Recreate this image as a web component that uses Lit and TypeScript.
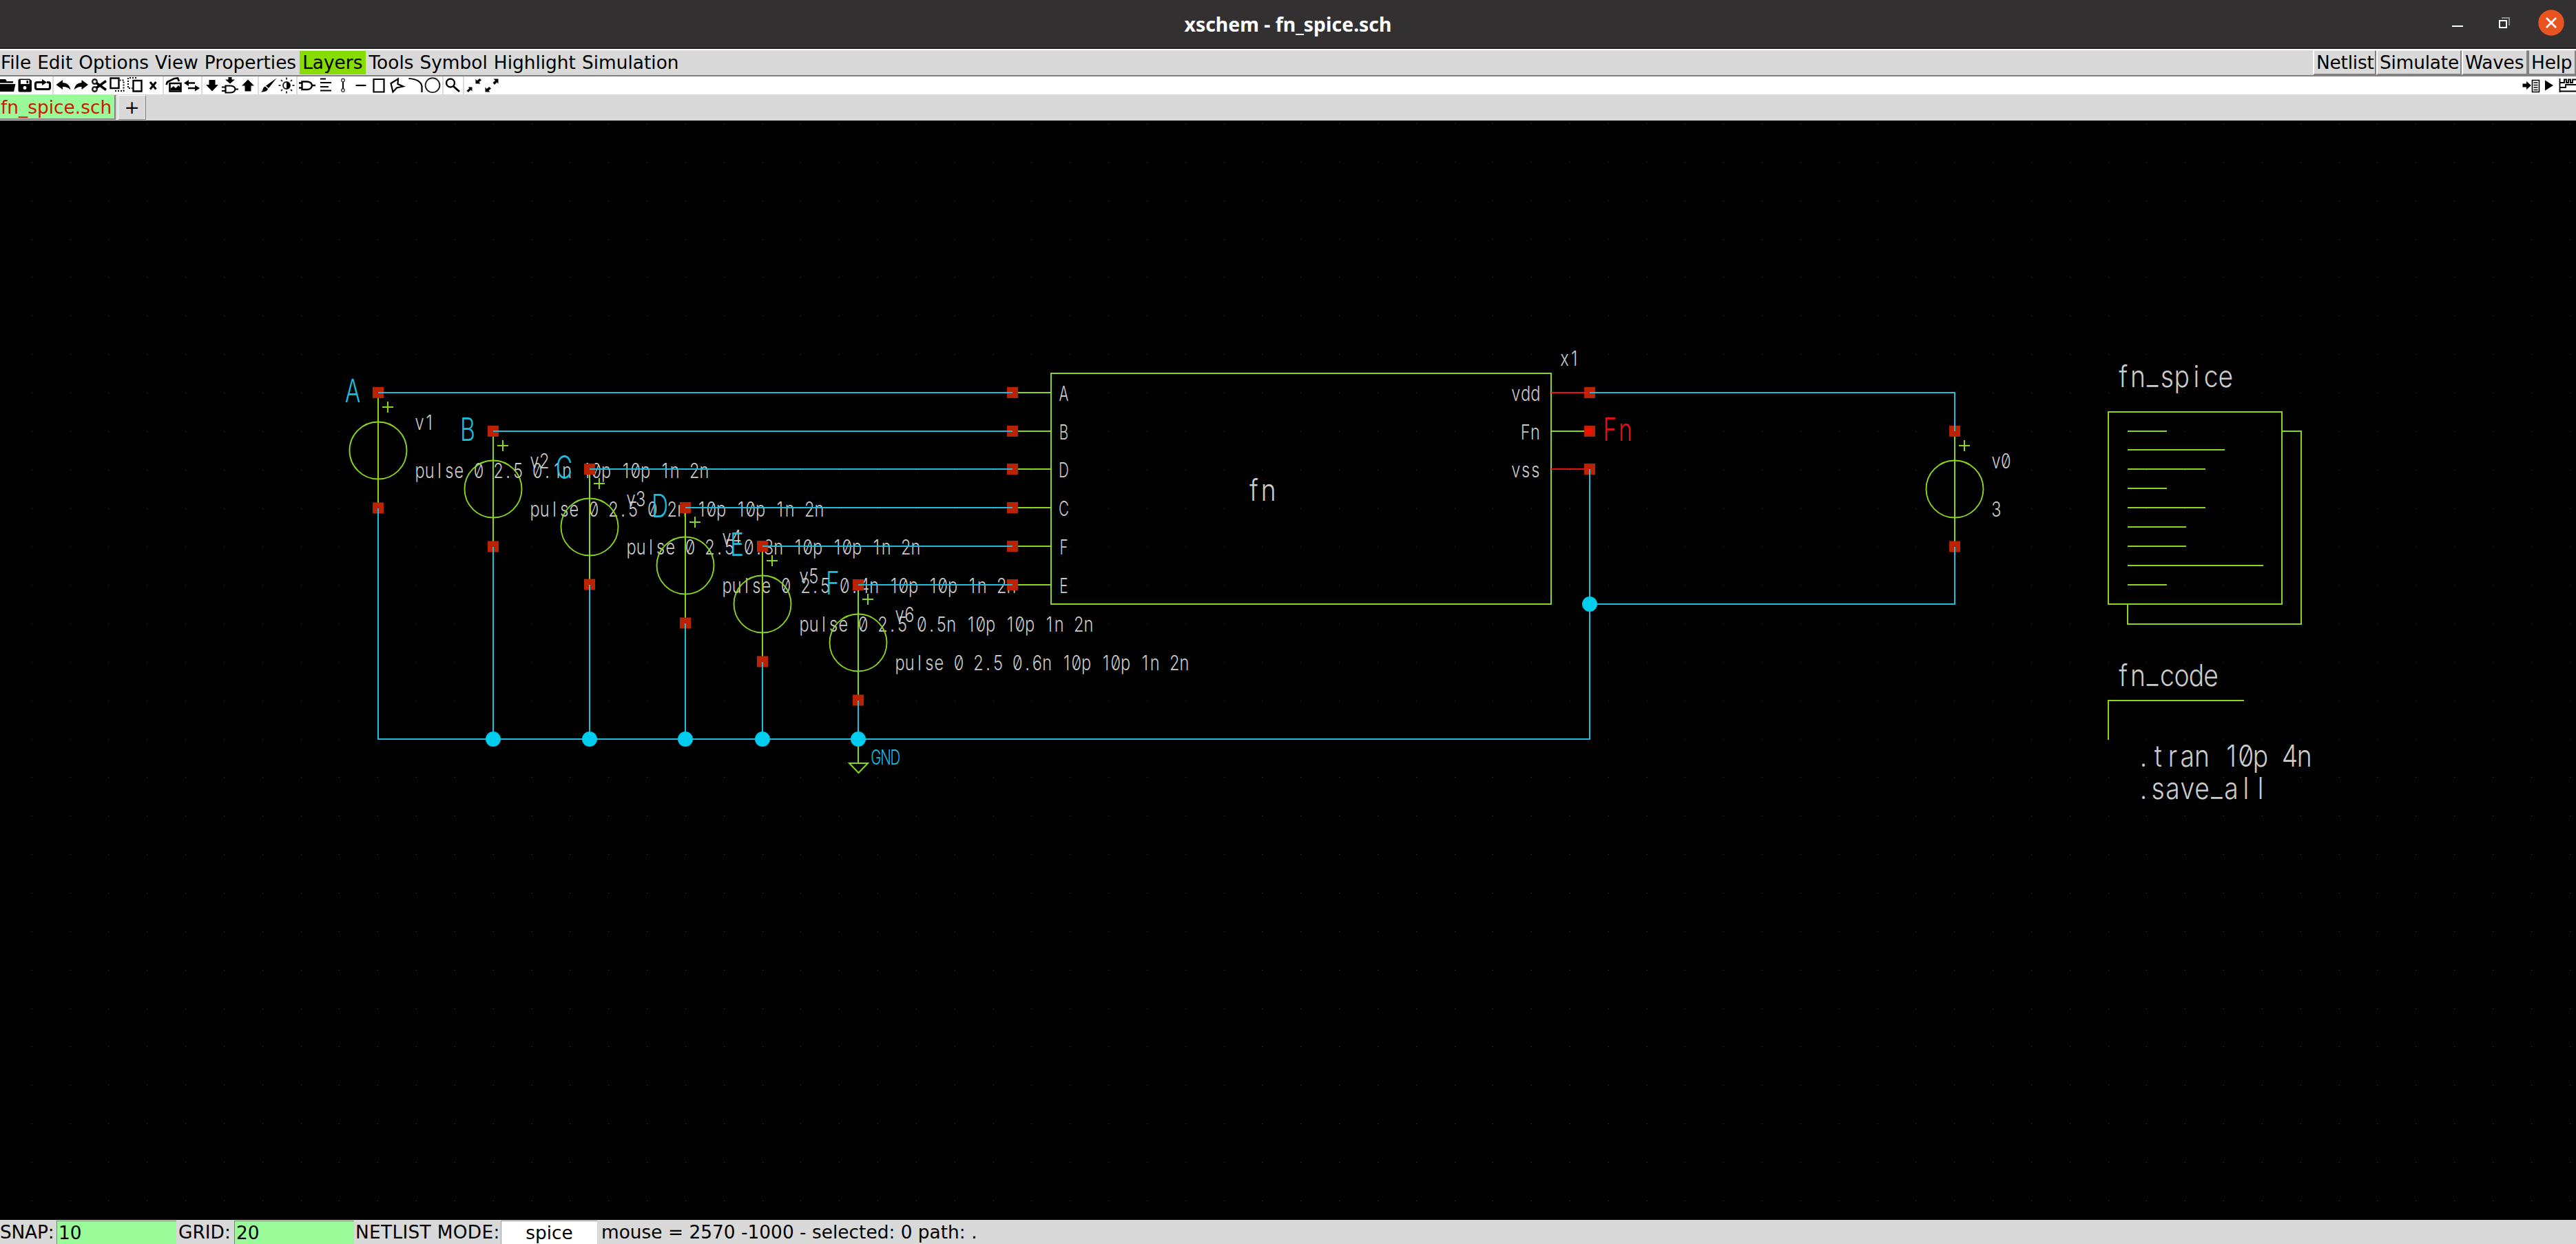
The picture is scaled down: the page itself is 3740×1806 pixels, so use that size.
import { LitElement, html, svg, css, type SVGTemplateResult } from "lit";
import { customElement } from "lit/decorators.js";

const GREEN = "#8ad61c";
const WIRE = "#1fbcdc";
const NODE = "#00ccee";
const PIN = "#bb2200";
const TEXT = "#cccccc";
const RED = "#e61212";

/* ---------- schematic helpers ---------- */

type Glyphs = { cap: number; adv: number; sx: number; weight: number };
const SMALL: Glyphs = { cap: 22, adv: 14.24, sx: 0.78, weight: 330 };
const CAPS: Glyphs = { cap: 22, adv: 14, sx: 0.68, weight: 360 };
const LARGE: Glyphs = { cap: 31.5, adv: 21.25, sx: 0.86, weight: 260 };
const LABEL: Glyphs = { cap: 33.5, adv: 22.5, sx: 0.73, weight: 280 };

/** Fixed-pitch text; cx is the centre of the first character cell. */
const label = (s: string, cx: number, base: number, g: Glyphs, color = TEXT) => {
  const chars = [...s];
  const xs = chars.map((_, i) => ((cx + i * g.adv) / g.sx).toFixed(2)).join(" ");
  const ys = chars.map((c) => (c === "_" ? base - g.cap * 0.1 : base).toFixed(1)).join(" ");
  return svg`<text class="glyphs" transform="scale(${g.sx} 1)" x=${xs} y=${ys} fill=${color}
    font-size=${g.cap / 0.727} font-weight=${g.weight}>${s}</text>`;
};

const line = (d: string, color = GREEN) => svg`<path d=${d} fill="none" stroke=${color} stroke-width="2" />`;
const pin = (x: number, y: number) => svg`<rect x=${x - 8} y=${y - 8} width="16" height="16" fill=${PIN} />`;
const dot = (x: number, y: number) => svg`<circle cx=${x} cy=${y} r="11" fill=${NODE} />`;

const grid = () => {
  let d = "";
  for (let j = 0; j < 29; j++)
    for (let i = 0; i < 67; i++) d += `M${Math.floor(46.3 + i * 55.83)} ${Math.round(179 + j * 55.85)}h1v1h-1z`;
  return svg`<path d=${d} fill="#444" />`;
};

type Source = { name: string; value: string; x: number; y: number; net?: string };
const sources: Source[] = [
  { name: "v1", value: "pulse 0 2.5 0.1n 10p 10p 1n 2n", x: 549, y: 570, net: "A" },
  { name: "v2", value: "pulse 0 2.5 0.2n 10p 10p 1n 2n", x: 716, y: 626, net: "B" },
  { name: "v3", value: "pulse 0 2.5 0.3n 10p 10p 1n 2n", x: 856, y: 681, net: "C" },
  { name: "v4", value: "pulse 0 2.5 0.4n 10p 10p 1n 2n", x: 995, y: 737, net: "D" },
  { name: "v5", value: "pulse 0 2.5 0.5n 10p 10p 1n 2n", x: 1107, y: 793, net: "E" },
  { name: "v6", value: "pulse 0 2.5 0.6n 10p 10p 1n 2n", x: 1246, y: 849, net: "F" },
  { name: "v0", value: "3", x: 2838, y: 626 },
];

const sourceBody = ({ x, y, name, value }: Source) => svg`
  ${line(`M${x} ${y}V${y + 168}`)}
  <circle cx=${x} cy=${y + 84} r="41.5" fill="none" stroke=${GREEN} stroke-width="1.9" />
  ${line(`M${x + 6} ${y + 21}h16M${x + 14} ${y + 13}v16`)}
  ${label(name, x + 60, y + 54, SMALL)}
  ${label(value, x + 60.5, y + 124, SMALL)}`;

const inputs: [string, number][] = [["A", 570], ["B", 626], ["D", 681], ["C", 737], ["F", 793], ["E", 849]];
const outputs: [string, number, string][] = [["vdd", 570, RED], ["Fn", 626, GREEN], ["vss", 681, RED]];
const codeLines: [number, number][] = [
  [626, 3146], [653, 3230], [681, 3202], [709, 3146], [737, 3202], [765, 3174], [793, 3174], [821, 3286], [849, 3146],
];

const schematic = () => svg`
  ${grid()}
  ${sources.map(sourceBody)}
  ${line("M1526 542H2252V877H1526Z")}
  ${inputs.map(([n, y]) => svg`${line(`M1470 ${y}H1526`)}${label(n, 1544.5, y + 12, CAPS)}`)}
  ${outputs.map(([n, y, c]) => svg`${line(`M2252 ${y}H2308`, c)}${label(n, 2228.5 - (n.length - 1) * 13.8, y + 12, SMALL)}`)}
  ${label("x1", 2271.5, 531, SMALL)}
  ${label("fn", 1820.5, 727, LARGE)}
  ${sources.map((s) => svg`${pin(s.x, s.y)}${pin(s.x, s.y + 167.5)}`)}
  ${inputs.map(([, y]) => pin(1470, y))}
  ${outputs.map(([, y]) => pin(2308, y))}
  <rect x="2302.500" y="620.500" width="10" height="10" fill="#ee1100" />
  ${line("M2301 570h7M2301 681h7", RED)}
  ${sources.filter((s) => s.net).map((s) => svg`
    ${line(`M${s.x} ${s.y}H1470`, WIRE)}
    ${line(`M${s.x} ${s.y + 168}V1073`, WIRE)}
    ${label(s.net!, s.x - 37, s.y + 14.5, LABEL, WIRE)}`)}
  ${line("M548 1073H2308V681M2308 570H2838V626M2838 794V877H2308", WIRE)}
  ${line("M1246 1073V1108M1233 1108H1260L1246.500 1122Z")}
  ${label("GND", 1272, 1110, CAPS, WIRE)}
  ${sources.slice(1, 6).map((s) => dot(s.x, 1073))}
  ${dot(2308, 877)}
  ${label("Fn", 2337.5, 640, LABEL, RED)}
  ${label("fn_spice", 3082.6, 562, LARGE)}
  ${line("M3061 598H3313V877H3061ZM3313 626H3341V906H3089V877")}
  ${codeLines.map(([y, x]) => line(`M3089 ${y}H${x}`))}
  ${label("fn_code", 3082.6, 996, LARGE)}
  ${line("M3061 1074V1017H3258")}
  ${label(".tran 10p 4n", 3112, 1113, LARGE)}
  ${label(".save_all", 3112, 1160, LARGE)}`;

/* ---------- toolbar icons, drawn on a 26px-high strip ---------- */

type Icon = { x: number; w: number; art: SVGTemplateResult };
const s = (d: string, w = 2) => svg`<path d=${d} fill="none" stroke="#000" stroke-width=${w} />`;
const f = (d: string) => svg`<path d=${d} fill="#000" fill-rule="evenodd" />`;

const groups: Icon[][] = [
  [
    { x: 0, w: 24, art: f("M-2 4H8L10 7H19V9.500H-2ZM-2 11H22.500L20 22H-2Z") },
    { x: 24, w: 24, art: f("M29 3.500H43L46 6V20.500Q46 22.500 44 22.500H28.500Q26.500 22.500 26.500 20.500V6Q26.500 3.500 29 3.500ZM30 5V11H42.500V5ZM38.500 6H41V10H38.500ZM36 14A2.500 2.500 0 1 0 36.100 14Z") },
    { x: 48, w: 28, art: svg`${s("M58 8.500H54Q51.500 8.500 51.500 11V16Q51.500 18.500 54 18.500H70Q72.500 18.500 72.500 16V11Q72.500 8.500 70 8.500H68", 3.2)}${s("M57 8.500H62", 3)}${f("M61 4L68 8.500L61 13Z")}` },
  ],
  [
    { x: 78, w: 27, art: f("M81.500 12L91 5V9Q101 9.500 102.500 19.500Q98 14.500 91 15V19Z") },
    { x: 105, w: 25, art: f("M128 12L118.500 5V9Q109 9.500 107.500 19.500Q112 14.500 118.500 15V19Z") },
    { x: 130, w: 27, art: svg`<circle cx="137.500" cy="7.500" r="3.300" fill="none" stroke="#222" stroke-width="2.400"/><circle cx="137.500" cy="18.500" r="3.300" fill="none" stroke="#222" stroke-width="2.400"/>${s("M140 9.500L154 19.500M140 16.500L154 6.500", 3.4)}` },
    { x: 157, w: 26, art: svg`${s("M160.500 2.500H172.500V17H160.500Z", 2.4)}<path d="M167 21H179.500V5.500H174" fill="none" stroke="#000" stroke-width="2" stroke-dasharray="2 2"/>` },
    { x: 183, w: 28, art: svg`<path d="M198 2H186V17H192" fill="none" stroke="#000" stroke-width="2" stroke-dasharray="2 2"/>${s("M193.500 6H205.500V21.500H193.500Z", 2.4)}` },
    { x: 211, w: 25, art: s("M218 8L226.500 18.500M226.500 8L218 18.500", 3) },
  ],
  [
    { x: 238, w: 27, art: svg`${s("M241.500 12L243 8L253 3L258 2.500L260 7", 2.6)}${s("M246.500 10H262.500V21.500H246.500Z", 2.6)}${f("M248 20V17L252 14L255 17L259 13L262 16V20Z")}` },
    { x: 265, w: 27, art: svg`${s("M270 9.500H283M273 17H286", 2.6)}${f("M267 9.500L274 5V14ZM290 17L283 12.500V21.500Z")}` },
  ],
  [
    { x: 294, w: 26, art: f("M303.500 5H312.500V12H317L308 21.500L299 12H303.500Z") },
    { x: 320, w: 28, art: svg`${f("M331.500 1H336.500V4.500H341L334 10.500L327 4.500H331.500Z")}${s("M327.500 13.500H335Q341 14 341.500 18.500Q341 23 335 23.500H327.500ZM322 15.500H327M322 21H327M341 18.500H346", 2.2)}` },
    { x: 348, w: 26, art: f("M355.500 21.500H364.500V13.500H369L360 4.500L351 13.500H355.500Z") },
  ],
  [
    { x: 376, w: 28, art: f("M401.500 2.500L390 17L386 13.500ZM385 14.500L389 18Q388 22.500 379 22.500Q382 20 382 17.500Q383 15 385 14.500Z") },
    { x: 404, w: 26, art: svg`<circle cx="416" cy="13" r="5" fill="#fff" stroke="#222" stroke-width="2"/>${f("M416 8A5 5 0 0 1 416 18Z")}<path d="M416 1.500V4.500M416 21.500V24.500M404.500 13H407.500M424.500 13H427.500M408 5L410 7M422 19L424 21M424 5L422 7M410 19L408 21" stroke="#333" stroke-width="2" />` },
  ],
  [
    { x: 432, w: 28, art: s("M438.500 7.500H446Q452.500 8 453 13Q452.500 18.500 446 19H438.500ZM434 9.500H438M434 16.500H438M453 13H458", 2.4) },
    { x: 460, w: 25, art: s("M465 3.500H473M465 9H481M465 15H477M465 20.500H481", 2.2) },
    { x: 485, w: 26, art: svg`<circle cx="498" cy="5.500" r="2.300" fill="none" stroke="#444" stroke-width="1.400"/><circle cx="498" cy="20" r="2.300" fill="none" stroke="#444" stroke-width="1.400"/>${s("M498 8V17.500")}` },
    { x: 511, w: 26, art: s("M516.500 13H531.500", 2.2) },
    { x: 537, w: 26, art: s("M542.500 4H557.500V22.500H542.500Z", 2.2) },
    { x: 563, w: 28, art: s("M578 3.500L567.500 10L570.500 22.500L576 16.500L585.500 14.500L577.500 11Z", 2.2) },
    { x: 591, w: 25, art: s("M593.500 3Q610.500 4 612.500 14V23", 2.2) },
    { x: 616, w: 26, art: svg`<circle cx="628" cy="12.700" r="10.400" fill="none" stroke="#222" stroke-width="1.900"/>` },
  ],
  [{ x: 644, w: 28, art: svg`<circle cx="654" cy="9.500" r="6" fill="none" stroke="#000" stroke-width="2.400"/>${s("M658 14L667 22", 3)}` }],
  [
    { x: 674, w: 27, art: svg`${f("M679.500 15.500H685.500V21.500L683.500 19.500L680 23L677.500 20.500L681.500 17.500ZM690.500 3.500V10.500H697.500L695.500 8L699 5.500L696.500 3L692.500 6Z")}` },
    { x: 701, w: 27, art: svg`${f("M704.500 15.500V22.500H711.500L709.500 20.500L713 17.500L710.500 15L706.500 18ZM716.500 3.500H723.500V10.500L721.500 8.500L718 12L715.500 9L719 6Z")}` },
  ],
];

const runIcons: Icon[] = [
  { x: 3660, w: 30, art: svg`${f("M3662.500 10.500H3668V7L3675 13L3668 19V15.500H3662.500Z")}${s("M3676.500 5.500H3686.500V22.500H3676.500Z", 1.6)}${s("M3678.500 9H3684.500M3678.500 12.500H3684.500M3678.500 16H3684.500M3678.500 19.500H3684.500", 1.4)}` },
  { x: 3690, w: 22, art: f("M3695 5.500L3707 13L3695 20.500Z") },
  { x: 3712, w: 28, art: s("M3716.500 3V23M3716 21.500H3740M3717 9H3723V4.500H3726V9H3729V4.500H3732V9H3735V4.500H3740M3717 16H3725V12H3740", 1.8) },
];

const iconView = (i: Icon) => html`<svg class="icon" width=${i.w} height="26" viewBox="${i.x} 0 ${i.w} 26">${i.art}</svg>`;

@customElement("app-root")
export class AppRoot extends LitElement {
  static styles = css`
    :host { display: flex; flex-direction: column; width: 3740px; height: 1806px; overflow: hidden; background: #d9d9d9;
      font: 26.4px/34px "DejaVu Sans", sans-serif; color: #000; white-space: nowrap; }
    * { box-sizing: border-box; }
    svg { display: block; flex: none; }
    .titlebar { flex: none; height: 71px; display: grid; grid-template-columns: 1fr auto 1fr; align-items: start;
      background: #333031; border-bottom: 2px solid #231f20; color: #fff; }
    .title { grid-column: 2; padding-top: 15px; font: bold 28.4px/40px "Noto Sans", sans-serif; }
    .window-buttons { grid-column: 3; justify-self: end; }
    .menubar { flex: none; height: 40px; display: flex; align-items: stretch; border-top: 2px solid #fff; border-bottom: 2px solid #828282; }
    .menu { padding: 0 4.5px; margin: 1px 0; line-height: 34px; }
    .menu:first-child { padding-left: 1px; }
    .menu.active { background: #88dd00; }
    .spacer { flex: 1; }
    .button { flex: none; padding-left: 3px; border: solid; border-width: 1px 2px 2px; border-color: #ececec #828282 #828282 #fff; line-height: 33px; letter-spacing: -0.2px; }
    .button.help { padding-left: 3px; border-left-color: #828282; border-top-color: #d9d9d9; }
    .netlist { width: 92px; } .simulate { width: 124px; } .waves { width: 96px; } .help { width: 70px; }
    .toolbar { flex: none; height: 26px; display: flex; background: #fff; }
    .group { display: flex; border-right: 2px solid #d9d9d9; }
    .group:nth-child(8) { border: 0; }
    .tabs { flex: none; height: 38px; display: flex; padding-top: 1px; gap: 3px; }
    .tab { width: 168px; height: 36px; background: #98fb98; color: #d01505; border: solid; border-width: 0 2px 2px 0; border-color: #828282; line-height: 35px; }
    .tab-text { padding-left: 1px; }
    .add { width: 41px; height: 36px; border: 1px solid; border-color: #fff #828282 #828282 #fff; text-align: center; line-height: 34px; }
    .status { flex: none; height: 35px; display: flex; line-height: 35px; }
    .field { width: 174px; border: solid #6a8f6a; border-width: 1px 0 0 1px; margin-top: 1px; padding-left: 2px; background: #98fb98; line-height: 33px; }
    .mode { width: 140px; border: solid #999; border-width: 1px 0 0 1px; margin-top: 1px; text-align: center; background: #fff; line-height: 33px; }
    .snap { width: 82px; letter-spacing: -0.2px; }
    .grid { width: 84px; padding-left: 3px; }
    .netmode { width: 213px; padding-left: 2px; letter-spacing: 0.3px; }
    .mouse { padding-left: 6px; }
    .glyphs { font-family: "Inter", sans-serif; font-feature-settings: "zero" 1, "kern" 0, "liga" 0, "calt" 0; text-anchor: middle; white-space: pre; opacity: 0.995; }
    .canvas { background: #000; }
  `;

  render() {
    return html`
      <div class="titlebar">
        <div class="title">xschem - fn_spice.sch</div>
        <svg class="window-buttons" width="190" height="66" viewBox="3550 0 190 66">
          <path d="M3560 38H3576" stroke="#fff" stroke-width="2" />
          <path d="M3632 26H3643V37" fill="none" stroke="#8f8d8e" stroke-width="2" />
          <rect x="3629" y="30" width="10" height="10" fill="none" stroke="#fff" stroke-width="2" />
          <circle cx="3704" cy="33" r="18.700" fill="#e95420" />
          <path d="M3697 26L3711 40M3711 26L3697 40" stroke="#fff" stroke-width="2.800" />
        </svg>
      </div>
      <div class="menubar">
        ${["File", "Edit", "Options", "View", "Properties", "Layers", "Tools", "Symbol", "Highlight", "Simulation"].map(
          (m) => html`<div class="menu ${m === "Layers" ? "active" : ""}">${m}</div>`)}
        <div class="spacer"></div>
        ${["Netlist", "Simulate", "Waves", "Help"].map((b) => html`<div class="button ${b.toLowerCase()}">${b}</div>`)}
      </div>
      <div class="toolbar">
        ${groups.map((g) => html`<div class="group">${g.map(iconView)}</div>`)}
        <div class="spacer"></div>
        ${runIcons.map(iconView)}
      </div>
      <div class="tabs">
        <div class="tab"><span class="tab-text">fn_spice.sch</span></div>
        <div class="add">+</div>
      </div>
      <svg class="canvas" width="3740" height="1596" viewBox="0 175 3740 1596">${schematic()}</svg>
      <div class="status">
        <div class="snap">SNAP:</div><div class="field">10</div>
        <div class="grid">GRID:</div><div class="field">20</div>
        <div class="netmode">NETLIST MODE:</div><div class="mode">spice</div>
        <div class="mouse">mouse = 2570 -1000 - selected: 0 path: .</div>
      </div>`;
  }
}
